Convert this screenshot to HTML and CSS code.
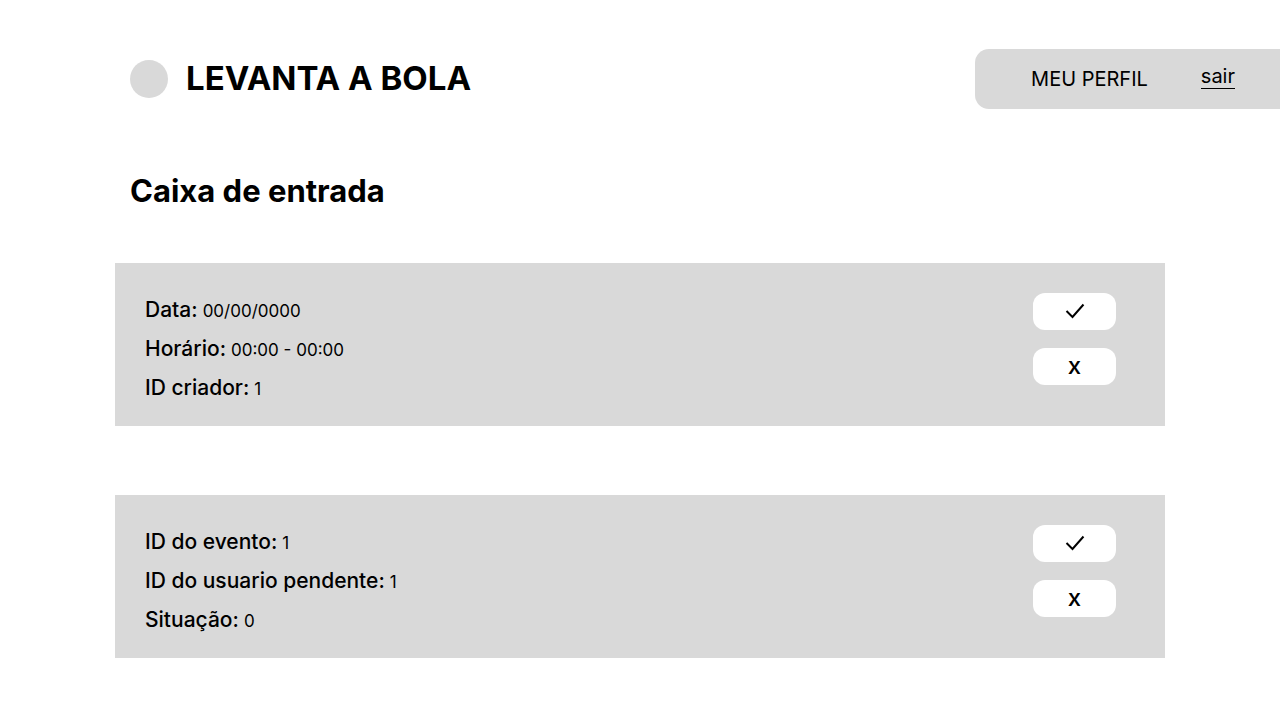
FILE: index.html
```html
<!DOCTYPE html>
<html lang="pt-BR">
<head>
<meta charset="utf-8">
<meta name="viewport" content="width=device-width, initial-scale=1">
<title>Levanta a Bola</title>
<link rel="stylesheet" href="styles.css">
</head>
<body>
<header class="header">
  <div class="brand">
    <span class="brand-mark"></span>
    <span class="brand-name">LEVANTA A BOLA</span>
  </div>
  <nav class="nav">
    <a class="nav-profile" href="#">MEU PERFIL</a>
    <a class="nav-exit" href="#">sair</a>
  </nav>
</header>
<main class="main">
  <h1 class="title">Caixa de entrada</h1>
  <div class="list">
    <article class="card">
      <dl class="fields">
        <div class="field"><dt>Data:</dt><dd>00/00/0000</dd></div>
        <div class="field"><dt>Horário:</dt><dd>00:00 - 00:00</dd></div>
        <div class="field"><dt>ID criador:</dt><dd>1</dd></div>
      </dl>
      <div class="actions">
        <button class="action" type="button" aria-label="Aceitar"><svg class="check" viewBox="0 0 20 18" aria-hidden="true"><path d="M1.5 9 7.5 15 18.5 2.5"/></svg></button>
        <button class="action" type="button" aria-label="Recusar">x</button>
      </div>
    </article>
    <article class="card">
      <dl class="fields">
        <div class="field"><dt>ID do evento:</dt><dd>1</dd></div>
        <div class="field"><dt>ID do usuario pendente:</dt><dd>1</dd></div>
        <div class="field"><dt>Situação:</dt><dd>0</dd></div>
      </dl>
      <div class="actions">
        <button class="action" type="button" aria-label="Aceitar"><svg class="check" viewBox="0 0 20 18" aria-hidden="true"><path d="M1.5 9 7.5 15 18.5 2.5"/></svg></button>
        <button class="action" type="button" aria-label="Recusar">x</button>
      </div>
    </article>
  </div>
</main>
</body>
</html>
```
FILE: styles.css
```css
* {
  box-sizing: border-box;
}

body {
  margin: 0;
  background: #fff;
  color: #000;
  font-family: Inter, "Liberation Sans", sans-serif;
}

.header {
  display: flex;
  align-items: center;
  justify-content: space-between;
  padding: 49px 0 0 130px;
}

.brand {
  display: flex;
  align-items: flex-start;
  gap: 18px;
}

.brand-mark {
  width: 38px;
  height: 38px;
  border-radius: 50%;
  background: #d9d9d9;
}

.brand-name {
  font-size: 33px;
  line-height: 36px;
  font-weight: 700;
}

.nav {
  display: flex;
  align-items: center;
  gap: 53px;
  height: 60px;
  padding: 0 45px 0 56px;
  border-radius: 14px 0 0 14px;
  background: #d9d9d9;
  font-size: 20px;
  line-height: 24px;
}

.nav a {
  color: inherit;
  text-decoration: none;
}

.nav .nav-exit {
  margin-bottom: 4px;
  border-bottom: 1px solid #000;
  line-height: 23px;
}

.main {
  padding: 62px 115px;
}

.title {
  margin: 0 0 52px;
  padding-left: 15px;
  font-size: 31px;
  line-height: 40px;
  font-weight: 700;
}

.list {
  display: grid;
  gap: 69px;
}

.card {
  display: flex;
  justify-content: space-between;
  padding: 30px 49px 22px 30px;
  background: #d9d9d9;
}

.fields {
  display: grid;
  grid-auto-rows: 33px;
  gap: 6px;
  margin: 0;
}

.field {
  display: flex;
  align-items: baseline;
  gap: 5px;
  line-height: 33px;
}

.field dt {
  font-size: 21px;
  font-weight: 500;
}

.field dd {
  margin: 0;
  font-size: 17px;
}

.actions {
  display: flex;
  flex-direction: column;
  gap: 18px;
}

.action {
  display: flex;
  align-items: center;
  justify-content: center;
  width: 83px;
  height: 37px;
  padding: 0 0 2px;
  border: 0;
  border-radius: 12px;
  background: #fff;
  color: #000;
  font: 500 24px/32px Inter, "Liberation Sans", sans-serif;
}

.check {
  width: 20px;
  height: 18px;
  fill: none;
  stroke: #000;
  stroke-width: 2;
}
```
